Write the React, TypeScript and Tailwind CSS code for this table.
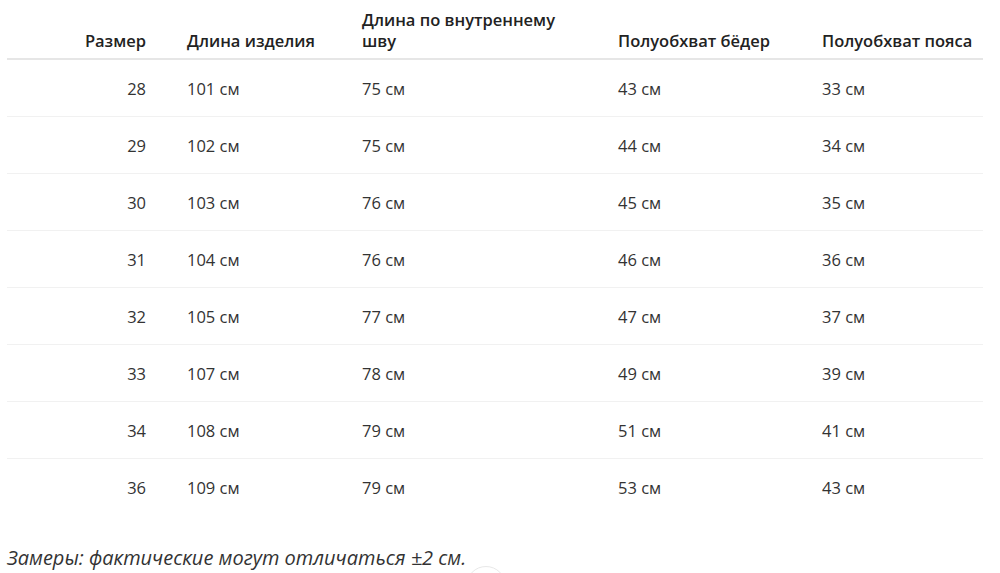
import React from "react";

const rows = [
  ["28", "101 см", "75 см", "43 см", "33 см"],
  ["29", "102 см", "75 см", "44 см", "34 см"],
  ["30", "103 см", "76 см", "45 см", "35 см"],
  ["31", "104 см", "76 см", "46 см", "36 см"],
  ["32", "105 см", "77 см", "47 см", "37 см"],
  ["33", "107 см", "78 см", "49 см", "39 см"],
  ["34", "108 см", "79 см", "51 см", "41 см"],
  ["36", "109 см", "79 см", "53 см", "43 см"],
];

const grid = "grid grid-cols-[180px_175px_256px_204px_161px]";

export default function App() {
  return (
    <div
      className="relative w-[1000px] h-[573px] overflow-hidden bg-white text-[#222]"
      style={{ fontFamily: '"Open Sans", "Noto Sans", sans-serif' }}
    >
      <div className="ml-[7px] w-[976px]">
        <div className={`${grid} h-[60px] items-end border-b-2 border-[#e6e6e6] pb-[7px] text-[16.5px] leading-[21px] font-semibold`}>
          <div className="pr-[41px] text-right">Размер</div>
          <div>Длина изделия</div>
          <div className="w-[220px]">Длина по внутреннему шву</div>
          <div>Полуобхват бёдер</div>
          <div>Полуобхват пояса</div>
        </div>
        {rows.map((r, i) => (
          <div
            key={r[0]}
            className={`${grid} h-[57px] items-center pt-[2px] text-[16.5px] text-[#333] ${
              i < rows.length - 1 ? "border-b border-[#f1f1f1]" : ""
            }`}
          >
            <div className="pr-[41px] text-right">{r[0]}</div>
            <div>{r[1]}</div>
            <div>{r[2]}</div>
            <div>{r[3]}</div>
            <div>{r[4]}</div>
          </div>
        ))}
      </div>
      <p className="ml-[7px] mt-[29px] text-[20px] leading-[26px] italic text-[#333]">
        Замеры: фактические могут отличаться ±2 см.
      </p>
      <div className="absolute left-[466px] top-[566px] h-[40px] w-[40px] rounded-full border border-[#e8e8e8]" />
    </div>
  );
}
